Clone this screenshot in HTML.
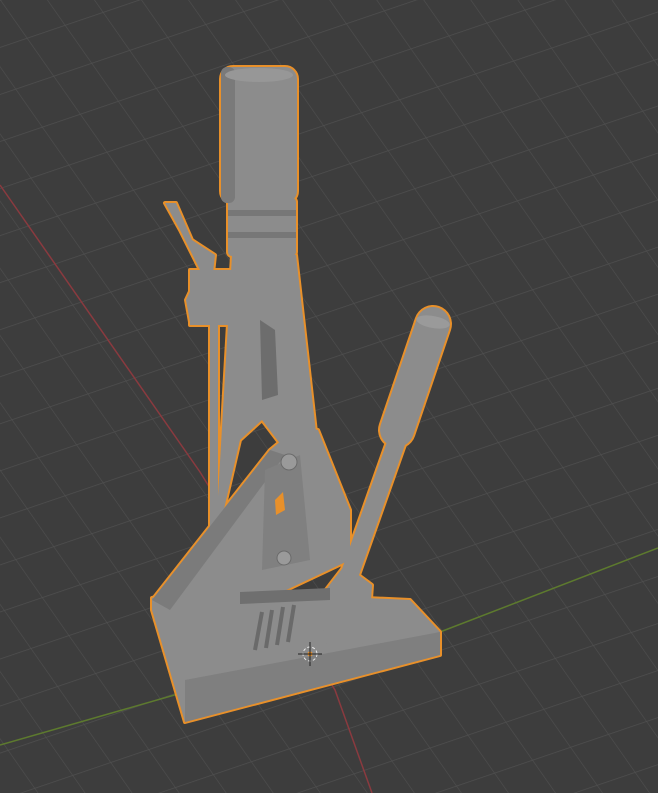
<!DOCTYPE html>
<html><head><meta charset="utf-8"><style>
html,body{margin:0;padding:0;background:#3d3d3d;width:658px;height:793px;overflow:hidden}
svg{display:block}
</style></head><body>
<svg width="658" height="793" viewBox="0 0 658 793" xmlns="http://www.w3.org/2000/svg">
<defs>
<pattern id="g" width="38" height="38" patternUnits="userSpaceOnUse" patternTransform="matrix(1,-0.34,0.7,1,0,0)">
<path d="M0 0H38M0 0V38" stroke="#4f4f4f" stroke-width="1.2" fill="none"/>
</pattern>
<g id="m">
<rect x="221" y="67" width="76" height="136" rx="12"/>
<rect x="228" y="198" width="68" height="58" rx="4"/>
<polygon points="232,255 296,255 318,450 300,470 262,420 240,440 215,548"/>
<polygon points="165,203 176,203 192,240 215,255 210,300 190,322 186,300 200,270 180,230"/>
<rect x="190" y="270" width="85" height="55"/>
<rect x="210" y="320" width="8" height="225"/>
<polygon points="152,600 270,450 300,425 318,430 350,510 350,560 180,640"/>
<polygon points="152,598 190,590 410,600 440,632 440,655 185,722 152,610"/>
<polygon points="318,600 345,565 372,585 368,640 330,662"/>
</g>
</defs>
<rect width="658" height="793" fill="#3d3d3d"/>
<rect width="658" height="793" fill="url(#g)"/>
<polyline points="0,185 200,472 335,690 372,793" fill="none" stroke="#8a3a3f" stroke-width="1.5"/>
<polyline points="0,745 185,692" fill="none" stroke="#5d7a2e" stroke-width="1.5"/>
<polyline points="440,632 658,548" fill="none" stroke="#5d7a2e" stroke-width="1.5"/>
<use href="#m" fill="#e8902a" stroke="#e8902a" stroke-width="4" stroke-linejoin="round"/>
<line x1="433" y1="324" x2="397" y2="430" stroke="#e8902a" stroke-width="38" stroke-linecap="round"/>
<line x1="400" y1="432" x2="347" y2="582" stroke="#e8902a" stroke-width="22"/>
<use href="#m" fill="#8c8c8c"/>
<line x1="433" y1="324" x2="397" y2="430" stroke="#8c8c8c" stroke-width="34" stroke-linecap="round"/>
<line x1="400" y1="432" x2="347" y2="582" stroke="#8c8c8c" stroke-width="18"/>
<polygon points="318,600 345,565 372,585 368,640 330,662" fill="#8c8c8c"/>
<rect x="221" y="67" width="14" height="136" rx="6" fill="#7a7a7a"/>
<ellipse cx="259" cy="75" rx="34" ry="7" fill="#979797"/>
<rect x="228" y="210" width="68" height="6" fill="#777"/>
<rect x="228" y="232" width="68" height="6" fill="#777"/>
<polygon points="260,320 275,330 278,395 262,400" fill="#6d6d6d"/>
<polygon points="152,600 270,450 285,455 170,610" fill="#7b7b7b"/>
<polygon points="185,680 440,632 440,655 185,722" fill="#7f7f7f"/>
<polygon points="265,470 300,455 310,560 262,570" fill="#808080"/>
<circle cx="289" cy="462" r="8" fill="#9a9a9a" stroke="#6a6a6a"/>
<circle cx="284" cy="558" r="7" fill="#9a9a9a" stroke="#6a6a6a"/>
<polygon points="275,500 283,492 285,510 276,515" fill="#e8902a"/>
<ellipse cx="433" cy="322" rx="17" ry="6" transform="rotate(10 433 322)" fill="#9a9a9a"/>
<path d="M255 650 L262 612 M266 648 L272 610 M277 645 L283 607 M288 642 L294 605" stroke="#6a6a6a" stroke-width="4"/>
<polygon points="240,592 330,588 330,600 240,604" fill="#6f6f6f"/>
<circle cx="310" cy="654" r="7" fill="none" stroke="#e9e9e9" stroke-dasharray="3,2"/>
<circle cx="310" cy="654" r="2.5" fill="#e8902a"/>
<path d="M298 654H322M310 642V666" stroke="#222" stroke-width="1"/>
</svg>
</body></html>
